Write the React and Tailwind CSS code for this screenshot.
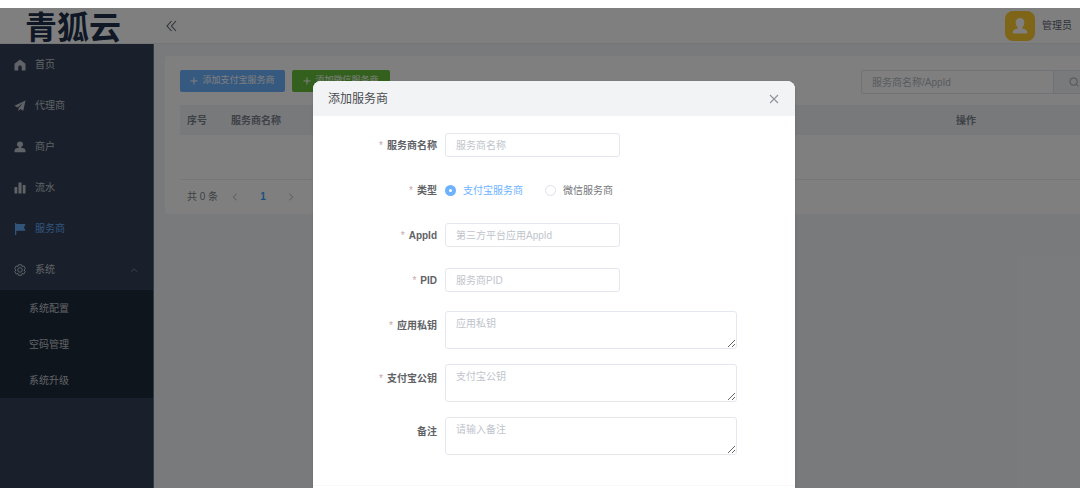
import React from "react";

function HomeIcon() {
  return (
    <svg viewBox="0 0 24 24" className="size-3 shrink-0" fill="currentColor" aria-hidden="true">
      <path d="M12 1 1 9.500V23h7.500v-6.500c0-4.500 7-4.500 7 0V23H23V9.500z" />
    </svg>
  );
}

function PlaneIcon() {
  return (
    <svg viewBox="0 0 24 24" className="size-3 shrink-0" fill="currentColor" aria-hidden="true">
      <path d="M23 1 1 11.500l6 3.500L18.500 5.500 9 16.500v6l3.500-4.500 6 3.500z" />
    </svg>
  );
}

function UserIcon() {
  return (
    <svg viewBox="0 0 24 24" className="size-3 shrink-0" fill="currentColor" aria-hidden="true">
      <ellipse cx="12" cy="6.500" rx="6" ry="5.500" />
      <path d="M9.500 10h5v4.500h-5zM1 22.500V20c0-4 2.500-6 7-6h8c4.500 0 7 2 7 6v2.500z" />
    </svg>
  );
}

function BarsIcon() {
  return (
    <svg viewBox="0 0 24 24" className="size-3 shrink-0" fill="currentColor" aria-hidden="true">
      <path d="M1 10h5.500v13H1zM9 1h6v22H9zM17.500 6H23v17h-5.500z" />
    </svg>
  );
}

function FlagIcon() {
  return (
    <svg viewBox="0 0 24 24" className="size-3 shrink-0" fill="currentColor" aria-hidden="true">
      <path d="M2 0h2.500v24H2zM4.500 2H23l-3 7 3 6.500H4.500z" />
    </svg>
  );
}

function GearIcon() {
  return (
    <svg viewBox="0 0 24 24" className="size-3 shrink-0" fill="none" stroke="currentColor" strokeWidth="2" strokeLinejoin="round" aria-hidden="true">
      <path d="M9 1.500h6l1 3.500 3.500-1 3 5L20 12l2.500 3-3 5-3.500-1-1 3.500H9L8 19l-3.500 1-3-5L4 12 1.500 9l3-5L8 5z" />
      <circle cx="12" cy="12" r="4.500" />
    </svg>
  );
}

function Chevron({ d, className }) {
  return (
    <svg viewBox="0 0 12 12" className={className} fill="none" stroke="currentColor" strokeWidth="1" aria-hidden="true">
      <path d={d} />
    </svg>
  );
}

const menu = [
  { label: "首页", Icon: HomeIcon },
  { label: "代理商", Icon: PlaneIcon },
  { label: "商户", Icon: UserIcon },
  { label: "流水", Icon: BarsIcon },
  { label: "服务商", Icon: FlagIcon, active: true },
];

const submenu = ["系统配置", "空码管理", "系统升级"];

function Sidebar() {
  return (
    <nav className="w-[154px] shrink-0 border-r border-[#6b7280] bg-[#344056] text-[#bfc5cc]">
      <ul>
        {menu.map(({ label, Icon, active }) => (
          <li key={label}>
            <a
              href="#"
              className={
                active
                  ? "flex h-[41px] items-center gap-[9px] pl-[14px] text-[#62a9f5]"
                  : "flex h-[41px] items-center gap-[9px] pl-[14px]"
              }
            >
              <Icon />
              {label}
            </a>
          </li>
        ))}
        <li>
          <button type="button" className="flex h-[41px] w-full items-center gap-[9px] pl-[14px] pr-[14px]">
            <GearIcon />
            系统
            <Chevron d="M2.500 8 6 4.500 9.500 8" className="ml-auto size-[10px] text-[#8d96a3]" />
          </button>
          <ul className="bg-[#1f2a3a]">
            {submenu.map((label) => (
              <li key={label}>
                <a href="#" className="flex h-9 items-center pl-[29px]">
                  {label}
                </a>
              </li>
            ))}
          </ul>
        </li>
      </ul>
    </nav>
  );
}

function Header() {
  return (
    <header className="flex h-9 items-center border-b border-[#e8eaee] bg-white pr-9">
      <h1 className="w-[154px] shrink-0 pt-1 pl-[25px] text-[32px] leading-8 font-bold text-[#20304a]">青狐云</h1>
      <button type="button" aria-label="收起菜单" className="ml-3 text-[#5a6270]">
        <svg viewBox="0 0 12 12" className="size-3" fill="none" stroke="currentColor" strokeWidth="1.100" aria-hidden="true">
          <path d="M5.500 1 1 6l4.500 5M10 1 5.500 6l4.500 5" />
        </svg>
      </button>
      <div className="ml-auto flex items-center gap-[7px] text-[#5a6472]">
        <svg viewBox="0 0 30 30" className="size-[30px]" aria-hidden="true">
          <rect width="30" height="30" rx="8" fill="#ffcb2e" />
          <path
            fill="#fff"
            d="M15 7c2.700 0 4.300 1.800 4.300 4.200 0 2.100-.8 4.100-2 5.100v1.200c2.600.7 5 1.600 5 3.800 0 .8-.5 1.200-1.200 1.200H8.900c-.7 0-1.200-.4-1.200-1.200 0-2.200 2.400-3.100 5-3.800v-1.200c-1.200-1-2-3-2-5.100C10.700 8.800 12.300 7 15 7z"
          />
        </svg>
        管理员
      </div>
    </header>
  );
}

function AddButton({ label, className }) {
  return (
    <button type="button" className={className}>
      <svg viewBox="0 0 8 8" className="size-2" stroke="currentColor" strokeWidth="1" aria-hidden="true">
        <path d="M4 .5v7M.5 4h7" />
      </svg>
      {label}
    </button>
  );
}

function ProviderList() {
  return (
    <section className="rounded-sm bg-white pt-[14px] pl-[15px]">
      <div className="flex h-[35px] items-start">
        <AddButton
          label="添加支付宝服务商"
          className="flex h-[22px] w-[105px] items-center justify-center gap-1 rounded-xs bg-[#6cb2ff] text-[9px] text-white"
        />
        <AddButton
          label="添加微信服务商"
          className="ml-[7px] flex h-[22px] w-[98px] items-center justify-center gap-1 rounded-xs bg-[#67c23a] text-[9px] text-white"
        />
        <form className="mr-[14px] ml-auto flex h-6">
          <input
            type="text"
            aria-label="搜索服务商"
            placeholder="服务商名称/AppId"
            className="w-[193px] rounded-l-xs border border-[#e2e5eb] bg-white px-[10px] placeholder:text-[#b0b8c0]"
          />
          <button
            type="button"
            aria-label="搜索"
            className="flex w-10 items-center justify-center rounded-r-xs border border-l-0 border-[#e2e5eb] bg-[#f3f5f8] text-[#909399]"
          >
            <svg viewBox="0 0 12 12" className="size-[10px]" fill="none" stroke="currentColor" strokeWidth="1" aria-hidden="true">
              <circle cx="5.500" cy="5.500" r="4.500" />
              <path d="m8.800 8.800 2.700 2.700" />
            </svg>
          </button>
        </form>
      </div>
      <table className="w-full table-fixed border-b border-[#ebeef5] text-[#7c858e]">
        <thead>
          <tr className="h-[30px] bg-[#f0f2f6]">
            <th scope="col" className="w-11 pl-[7px] text-left">序号</th>
            <th scope="col" className="w-[600px] pl-[7px] text-left">服务商名称</th>
            <th scope="col">操作</th>
          </tr>
        </thead>
        <tbody>
          <tr className="h-11">
            <td colSpan={3} />
          </tr>
        </tbody>
      </table>
      <div className="flex h-[34px] items-center pl-[7px] text-[#7a828a]">
        <span>共 0 条</span>
        <button type="button" aria-label="上一页" className="ml-3 text-[#9aa0a8]">
          <Chevron d="M8 2 4 6l4 4" className="size-[10px]" />
        </button>
        <button type="button" className="mx-3 w-[22px] font-bold text-[#409eff]">1</button>
        <button type="button" aria-label="下一页" className="text-[#9aa0a8]">
          <Chevron d="m4 2 4 4-4 4" className="size-[10px]" />
        </button>
      </div>
    </section>
  );
}

function FormRow({ id, label, required, children }) {
  return (
    <div className="flex items-start">
      <label htmlFor={id} className="w-[132px] shrink-0 pr-2 text-right leading-[30px] font-bold text-[#606266]">
        {required && <span className="mr-1 font-normal text-[#c9a5a8]">*</span>}
        {label}
      </label>
      <div className="flex min-h-7 flex-1 items-center">{children}</div>
    </div>
  );
}

function TextField({ id, label, placeholder }) {
  return (
    <FormRow id={id} label={label} required>
      <input
        id={id}
        type="text"
        placeholder={placeholder}
        className="h-6 w-[175px] rounded-[3px] border border-[#e4e7ed] px-[10px] placeholder:text-[#c0c4cc]"
      />
    </FormRow>
  );
}

function AreaField({ id, label, placeholder, required }) {
  return (
    <FormRow id={id} label={label} required={required}>
      <textarea
        id={id}
        placeholder={placeholder}
        className="block h-[38px] w-full resize rounded-[3px] border border-[#e4e7ed] px-[10px] py-1 leading-[15px] placeholder:text-[#c0c4cc]"
      />
    </FormRow>
  );
}

function Dialog() {
  return (
    <div role="dialog" aria-labelledby="dialog-title" className="mx-auto mt-[73px] w-[482px] overflow-hidden rounded-lg bg-white shadow-sm">
      <div className="flex h-[35px] items-center justify-between bg-[#f2f3f5] pr-4 pl-[15px]">
        <h2 id="dialog-title" className="text-xs text-[#4a4c50]">添加服务商</h2>
        <button type="button" aria-label="关闭" className="text-[#909399]">
          <svg viewBox="0 0 10 10" className="size-[10px]" stroke="currentColor" strokeWidth="1.100" aria-hidden="true">
            <path d="m1 1 8 8M9 1 1 9" />
          </svg>
        </button>
      </div>
      <form className="flex flex-col gap-[15px] pt-[15px] pr-[58px] pb-[30px]">
        <TextField id="name" label="服务商名称" placeholder="服务商名称" />
        <FormRow id="type-alipay" label="类型" required>
          <label className="flex items-center gap-[7px] text-[#6cb2ff]">
            <input
              id="type-alipay"
              type="radio"
              name="type"
              defaultChecked
              className="size-[11px] appearance-none rounded-full border border-[#dcdfe6] checked:border-4 checked:border-[#6cb2ff]"
            />
            支付宝服务商
          </label>
          <label className="ml-[22px] flex items-center gap-[7px] text-[#74767a]">
            <input
              type="radio"
              name="type"
              className="size-[11px] appearance-none rounded-full border border-[#dcdfe6] checked:border-4 checked:border-[#6cb2ff]"
            />
            微信服务商
          </label>
        </FormRow>
        <TextField id="appid" label="AppId" placeholder="第三方平台应用AppId" />
        <TextField id="pid" label="PID" placeholder="服务商PID" />
        <AreaField id="private-key" label="应用私钥" placeholder="应用私钥" required />
        <AreaField id="public-key" label="支付宝公钥" placeholder="支付宝公钥" required />
        <AreaField id="remark" label="备注" placeholder="请输入备注" />
      </form>
      <div className="h-12 border-t border-[#f8f8f9]" />
    </div>
  );
}

export default function App() {
  return (
    <div className="h-screen overflow-hidden bg-white pt-2 font-['Liberation_Sans','Noto_Sans_CJK_SC',sans-serif] text-[10px]">
      <div className="relative flex h-full w-[calc(100%+28px)] flex-col">
        <Header />
        <div className="flex flex-1">
          <Sidebar />
          <main className="min-w-0 flex-1 bg-[#f3f5f8] pt-3 pl-[11px]">
            <ProviderList />
          </main>
        </div>
        <div className="absolute inset-0 overflow-hidden bg-black/50">
          <Dialog />
        </div>
      </div>
    </div>
  );
}
